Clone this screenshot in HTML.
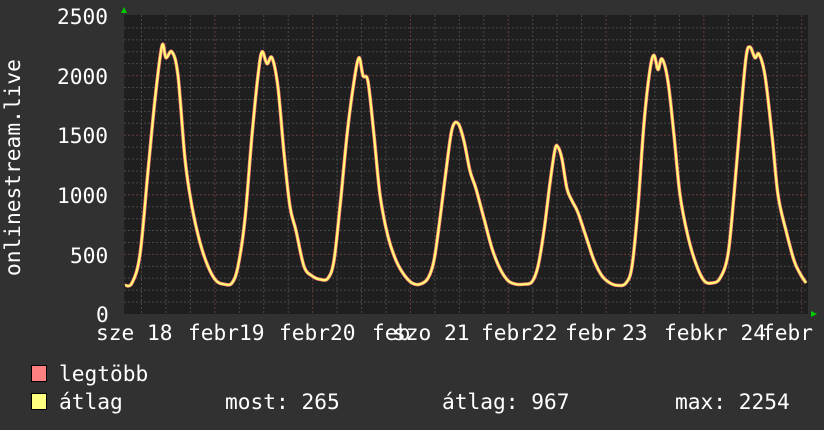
<!DOCTYPE html>
<html><head><meta charset="utf-8"><style>
html,body{margin:0;padding:0;background:#333;}
svg{display:block}
text{font-family:"DejaVu Sans Mono","Liberation Mono",monospace;font-size:21.2px;fill:#fff}
</style></head><body>
<svg id="s" width="824" height="430" xmlns="http://www.w3.org/2000/svg">
<rect width="824" height="430" fill="#313131"/>
<rect x="124" y="15" width="684" height="299" fill="#1f1f1f"/>
<g id="grid"></g>
<path id="mx" fill="none" stroke="#ff8080" stroke-width="3.5" stroke-linejoin="round"/>
<path id="av" fill="none" stroke="#ffff70" stroke-width="2" stroke-linejoin="round"/>
<polygon points="121,13 127,13 124,7" fill="#0c0"/>
<polygon points="811,311 811,317 817,314" fill="#0c0"/>
<text x="57" y="24">2500</text>
<text x="57" y="84">2000</text>
<text x="57" y="143">1500</text>
<text x="57" y="203">1000</text>
<text x="70" y="263">500</text>
<text x="96" y="322">0</text>
<text transform="translate(20,276) rotate(-90)">onlinestream.live</text>
<text x="96" y="340">sze 18</text>
<text x="188" y="340">febr19</text>
<text x="279" y="340">febr20</text>
<text x="372" y="340">feb</text>
<text x="393" y="340">szo 21</text>
<text x="481" y="340">febr22</text>
<text x="565" y="340">febr</text>
<text x="622" y="340">23</text>
<text x="664" y="340">febkr 24</text>
<text x="762" y="340">febr</text>
<rect x="31.5" y="365.5" width="15" height="16" fill="#ff8080" stroke="#000"/>
<rect x="31.5" y="393.5" width="15" height="16" fill="#ffff80" stroke="#000"/>
<text x="59" y="381">legtöbb</text>
<text x="59" y="409">átlag</text>
<text x="225" y="409">most: 265</text>
<text x="442" y="409">átlag: 967</text>
<text x="675" y="409">max: 2254</text>
</svg>
<script>
var g=document.getElementById('grid'),h='';
for(var v=100;v<2500;v+=100){var y=314-v*0.1192;var maj=v%500==0;
h+='<line x1="124" x2="808" y1="'+y+'" y2="'+y+'" stroke="'+(maj?'#6a3b3b':'#4a4a4a')+'" stroke-width="1" stroke-dasharray="2,2"/>';}
for(var x=141.5;x<808;x+=24.45){var d=Math.abs(((x-215)/97.8)-Math.round((x-215)/97.8))<0.05;
h+='<line x1="'+x+'" x2="'+x+'" y1="15" y2="314" stroke="'+(d?'#6a3b3b':'#4a4a4a')+'" stroke-dasharray="2,2"/>';}
g.innerHTML=h;
var k=[125,240,132,260,140,500,148,1200,155,1800,162,2250,166,2150,172,2200,178,2000,185,1300,192,900,200,600,208,400,216,280,224,250,232,260,238,400,245,800,252,1500,258,2000,262,2200,267,2100,272,2150,278,1900,284,1350,290,900,296,700,304,400,312,320,320,290,328,300,334,450,340,900,347,1500,354,1950,359,2150,363,2000,368,1950,374,1500,380,1000,388,650,396,450,404,330,412,260,420,250,428,300,434,450,440,800,446,1200,452,1550,458,1600,464,1450,470,1200,476,1050,484,800,492,550,500,380,508,280,516,250,524,250,532,270,538,400,544,700,550,1100,555,1380,558,1400,562,1300,567,1050,572,950,578,850,586,650,594,450,602,320,610,260,618,240,626,260,632,400,638,900,644,1600,650,2050,654,2170,658,2050,662,2140,668,1950,674,1500,680,1000,688,650,696,420,704,280,712,260,720,300,728,500,734,1000,740,1600,746,2150,750,2240,755,2150,759,2180,765,2000,772,1500,778,1000,786,700,794,450,800,340,806,260];
var P=[];for(var i=0;i<k.length;i+=2)P.push([k[i],314-k[i+1]*0.1192]);
var d='M'+P[0][0]+','+P[0][1];
for(var i=0;i<P.length-1;i++){var p0=P[Math.max(0,i-1)],p1=P[i],p2=P[i+1],p3=P[Math.min(P.length-1,i+2)];
var c1x=p1[0]+(p2[0]-p0[0])/6,c1y=p1[1]+(p2[1]-p0[1])/6,c2x=p2[0]-(p3[0]-p1[0])/6,c2y=p2[1]-(p3[1]-p1[1])/6;
d+=' C'+c1x.toFixed(1)+','+c1y.toFixed(1)+' '+c2x.toFixed(1)+','+c2y.toFixed(1)+' '+p2[0]+','+p2[1].toFixed(1);}
document.getElementById('mx').setAttribute('d',d);
document.getElementById('av').setAttribute('d',d);
</script>
</body></html>
